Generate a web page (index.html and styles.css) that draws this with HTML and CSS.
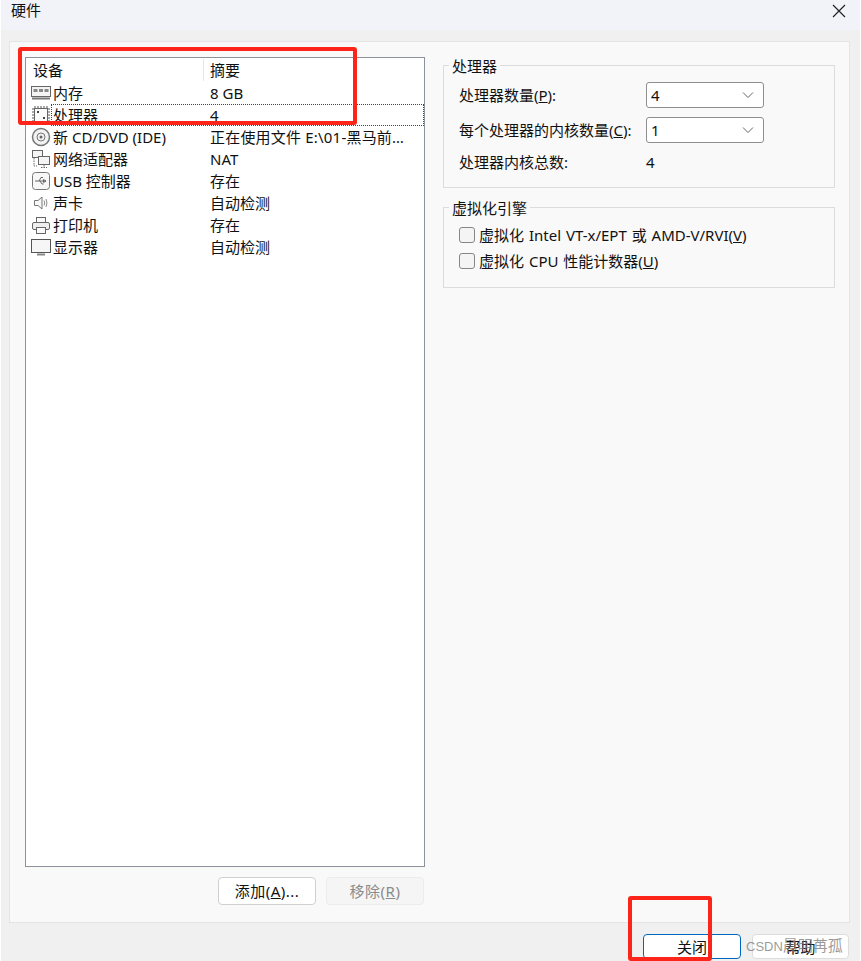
FILE: index.html
```html
<!DOCTYPE html>
<html lang="zh-CN">
<head>
<meta charset="utf-8">
<title>硬件</title>
<link rel="stylesheet" href="styles.css">
</head>
<body>
<div class="window">
  <header class="titlebar">
    <span class="title">硬件</span>
    <svg class="close" width="16" height="16" viewBox="0 0 16 16"><path d="M2 2 L14 14 M14 2 L2 14" stroke="#222" stroke-width="1.2" fill="none"/></svg>
  </header>
  <main class="panel">
    <section class="left">
      <div class="listbox">
        <div class="row head"><span class="c1">设备</span><span class="c2">摘要</span></div>
        <div class="row"><span class="c1"><svg class="ico" viewBox="0 0 20 16"><rect x="0.5" y="1.5" width="19" height="10" fill="#f4f4f4" stroke="#666"/><rect x="2.5" y="4" width="4" height="3" fill="#888"/><rect x="8" y="4" width="4" height="3" fill="#888"/><rect x="13.5" y="4" width="4" height="3" fill="#888"/><path d="M1 13.5H19" stroke="#777" stroke-width="2"/></svg>内存</span><span class="c2">8 GB</span></div>
        <div class="row"><span class="c1"><svg class="ico" viewBox="0 0 20 20"><path d="M1 4H3M1 7H3M1 10H3M1 13H3M1 16H3M17 4H19M17 7H19M17 10H19M17 13H19M17 16H19M4 1V3M7 1V3M10 1V3M13 1V3M16 1V3M4 17V19M7 17V19M10 17V19M13 17V19M16 17V19" stroke="#555"/><rect x="3.5" y="3.5" width="13" height="13" fill="#fafafa" stroke="#666"/><rect x="6" y="6" width="2" height="2" fill="#444"/><rect x="12" y="12" width="2" height="2" fill="#444"/></svg><span class="focus-label">处理器</span></span><span class="c2">4</span><i class="focus"></i></div>
        <div class="row"><span class="c1"><svg class="ico" viewBox="0 0 20 20"><circle cx="10" cy="10" r="8.5" fill="#f2f2f2" stroke="#777" stroke-width="1.5"/><circle cx="10" cy="10" r="4" fill="none" stroke="#777"/><circle cx="10" cy="10" r="1.5" fill="#666"/></svg>新 CD/DVD (IDE)</span><span class="c2 long">正在使用文件 E:\01-黑马前…</span></div>
        <div class="row"><span class="c1"><svg class="ico" viewBox="0 0 20 20"><rect x="1.5" y="1.5" width="10" height="7" fill="#f4f4f4" stroke="#666"/><rect x="7.5" y="7.5" width="11" height="8" fill="#f4f4f4" stroke="#666"/><path d="M10 18.5H16M13 16V18M3 9V17H6" stroke="#666" fill="none" stroke-dasharray="1.5 1"/></svg>网络适配器</span><span class="c2">NAT</span></div>
        <div class="row"><span class="c1"><svg class="ico" viewBox="0 0 20 20"><rect x="1.5" y="1.5" width="17" height="17" rx="3" fill="#f7f7f7" stroke="#777"/><path d="M4 10H15M15 10L12.5 8.5V11.5ZM8 10L10 6.5H12M9 10L11 13H12.5" stroke="#666" fill="none"/></svg>USB 控制器</span><span class="c2">存在</span></div>
        <div class="row"><span class="c1"><svg class="ico" viewBox="0 0 20 20"><path d="M3.5 7.5H7L11 4V16L7 12.5H3.5Z" fill="#f7f7f7" stroke="#777"/><path d="M13 7.5Q14.5 10 13 12.5M15 6Q17 10 15 14" stroke="#888" fill="none"/></svg>声卡</span><span class="c2">自动检测</span></div>
        <div class="row"><span class="c1"><svg class="ico" viewBox="0 0 20 20"><rect x="5.5" y="2.5" width="9" height="5" fill="#fafafa" stroke="#666"/><rect x="1.5" y="7.5" width="17" height="7" rx="1.5" fill="#eee" stroke="#666"/><rect x="5.5" y="12.5" width="9" height="6" fill="#fafafa" stroke="#666"/></svg>打印机</span><span class="c2">存在</span></div>
        <div class="row"><span class="c1"><svg class="ico" viewBox="0 0 20 20"><rect x="0.5" y="2.5" width="19" height="13" fill="#f6f6f6" stroke="#555"/><path d="M6 17.5H14" stroke="#888" stroke-width="2"/></svg>显示器</span><span class="c2">自动检测</span></div>
      </div>
      <div class="list-actions">
        <button class="btn">添加(<u>A</u>)...</button>
        <button class="btn off">移除(<u>R</u>)</button>
      </div>
    </section>
    <section class="right">
      <fieldset class="group g1">
        <legend>处理器</legend>
        <div class="field"><label>处理器数量(<u>P</u>):</label><div class="select">4<svg width="12" height="8" viewBox="0 0 12 8"><path d="M1 1.5 L6 6.5 L11 1.5" stroke="#666" fill="none"/></svg></div></div>
        <div class="field"><label>每个处理器的内核数量(<u>C</u>):</label><div class="select">1<svg width="12" height="8" viewBox="0 0 12 8"><path d="M1 1.5 L6 6.5 L11 1.5" stroke="#666" fill="none"/></svg></div></div>
        <div class="field total"><label>处理器内核总数:</label><span class="val">4</span></div>
      </fieldset>
      <fieldset class="group g2">
        <legend>虚拟化引擎</legend>
        <div class="check"><i class="box"></i><span>虚拟化 Intel VT-x/EPT 或 AMD-V/RVI(<u>V</u>)</span></div>
        <div class="check"><i class="box"></i><span>虚拟化 CPU 性能计数器(<u>U</u>)</span></div>
      </fieldset>
    </section>
  </main>
  <footer class="footer">
    <button class="btn primary">关闭</button>
    <button class="btn help">帮助</button>
  </footer>
  <div class="mark m1"></div>
  <div class="mark m2"></div>
  <div class="watermark"><span class="wm-latin">CSDN</span>晨明苒孤</div>
</div>
</body>
</html>
```
FILE: styles.css
```css
* { box-sizing: border-box; }
html, body { margin: 0; height: 100%; background: #fff; }
body { overflow: hidden; }
.window {
  position: relative;
  width: 859px;
  height: 961px;
  margin-left: 1px;
  overflow: hidden;
  display: flex;
  flex-direction: column;
  background: #f0f0f0;
  color: #111;
  font: 15px/22px "Noto Sans", "Noto Sans CJK SC", sans-serif;
}
.titlebar {
  height: 30px;
  flex: none;
  background: #f1f3f9;
  display: flex;
  align-items: center;
  justify-content: space-between;
  padding: 0 13px 0 10px;
}
.title { position: relative; top: -5px; }
.close { position: relative; top: -4px; }
.panel {
  flex: none;
  height: 882px;
  margin: 11px 10px 0 8px;
  background: #f9f9f9;
  border: 1px solid #e4e4e4;
  padding: 15px 13px 0 15px;
  display: flex;
  gap: 18px;
}
.left { width: 400px; flex: none; display: flex; flex-direction: column; }
.listbox {
  height: 810px;
  background: #fff;
  border: 1px solid #8d919c;
}
.row { position: relative; height: 22px; display: flex; align-items: center; white-space: nowrap; }
.row.head { height: 24px; }
.c1 { width: 184px; flex: none; padding-left: 5px; display: flex; align-items: center; }
.head .c1 { padding-left: 7px; height: 22px; border-right: 1px solid #e5e5e5; width: 178px; }
.head .c2 { padding-left: 6px; }
.long { letter-spacing: .2px; }
.ico { width: 20px; height: 20px; margin-right: 2px; flex: none; }
.focus { position: absolute; left: 25px; right: 0; top: 0; bottom: 0; border: 1px dotted #444; }
.list-actions { display: flex; justify-content: flex-end; gap: 10px; margin: 10px 1px 0 0; }
.btn {
  width: 98px;
  height: 28px;
  background: #fff;
  border: 1px solid #d0d0d0;
  border-radius: 4px;
  font: inherit;
  color: #111;
  padding: 0;
  line-height: 22px;
}
.list-actions .btn { letter-spacing: .5px; }
.btn.off { background: #f5f5f5; color: #8a8a8a; border-color: #ececec; }
.right { width: 392px; flex: none; display: flex; flex-direction: column; gap: 19px; padding-top: 8px; }
.group {
  margin: 0;
  padding: 0 0 0 15px;
  border: 1px solid #dcdcdc;
  position: relative;
}
.group legend {
  position: absolute;
  top: -11px;
  left: 5px;
  padding: 0 3px;
  background: #f9f9f9;
}
.g1 { height: 123px; padding-top: 16px; }
.g2 { height: 81px; padding-top: 14px; }
.field { display: flex; align-items: center; height: 25px; margin-bottom: 10px; }
.field label { width: 187px; flex: none; white-space: nowrap; }
.field.total { height: 22px; margin-top: -1px; }
.select {
  width: 118px;
  height: 26px;
  background: #fff;
  border: 1px solid #8f8f8f;
  border-radius: 3px;
  padding: 0 9px 0 4px;
  display: flex;
  align-items: center;
  justify-content: space-between;
}
.check { display: flex; align-items: center; height: 26px; white-space: nowrap; word-spacing: 1px; }
.box {
  width: 16px; height: 16px; flex: none;
  margin-right: 4px;
  background: #f4f4f4;
  border: 1px solid #868686;
  border-radius: 3px;
}
.footer { flex: none; display: flex; gap: 11px; padding: 11px 0 0 642px; }
.footer .btn { height: 25px; flex: none; }
.primary { border: 1px solid #0067c0; }
.help { width: 97px; border-color: #ddd; }
.mark { position: absolute; border: 4px solid #fd2519; border-radius: 3px; pointer-events: none; }
.m1 { left: 17px; top: 47px; width: 339px; height: 78px; }
.m2 { left: 627px; top: 896px; width: 84px; height: 65px; }
.watermark {
  position: absolute;
  left: 745px;
  top: 934px;
  color: rgba(120,120,120,.75);
}
.wm-latin { font: 13px/22px "Liberation Sans", sans-serif; }
```
